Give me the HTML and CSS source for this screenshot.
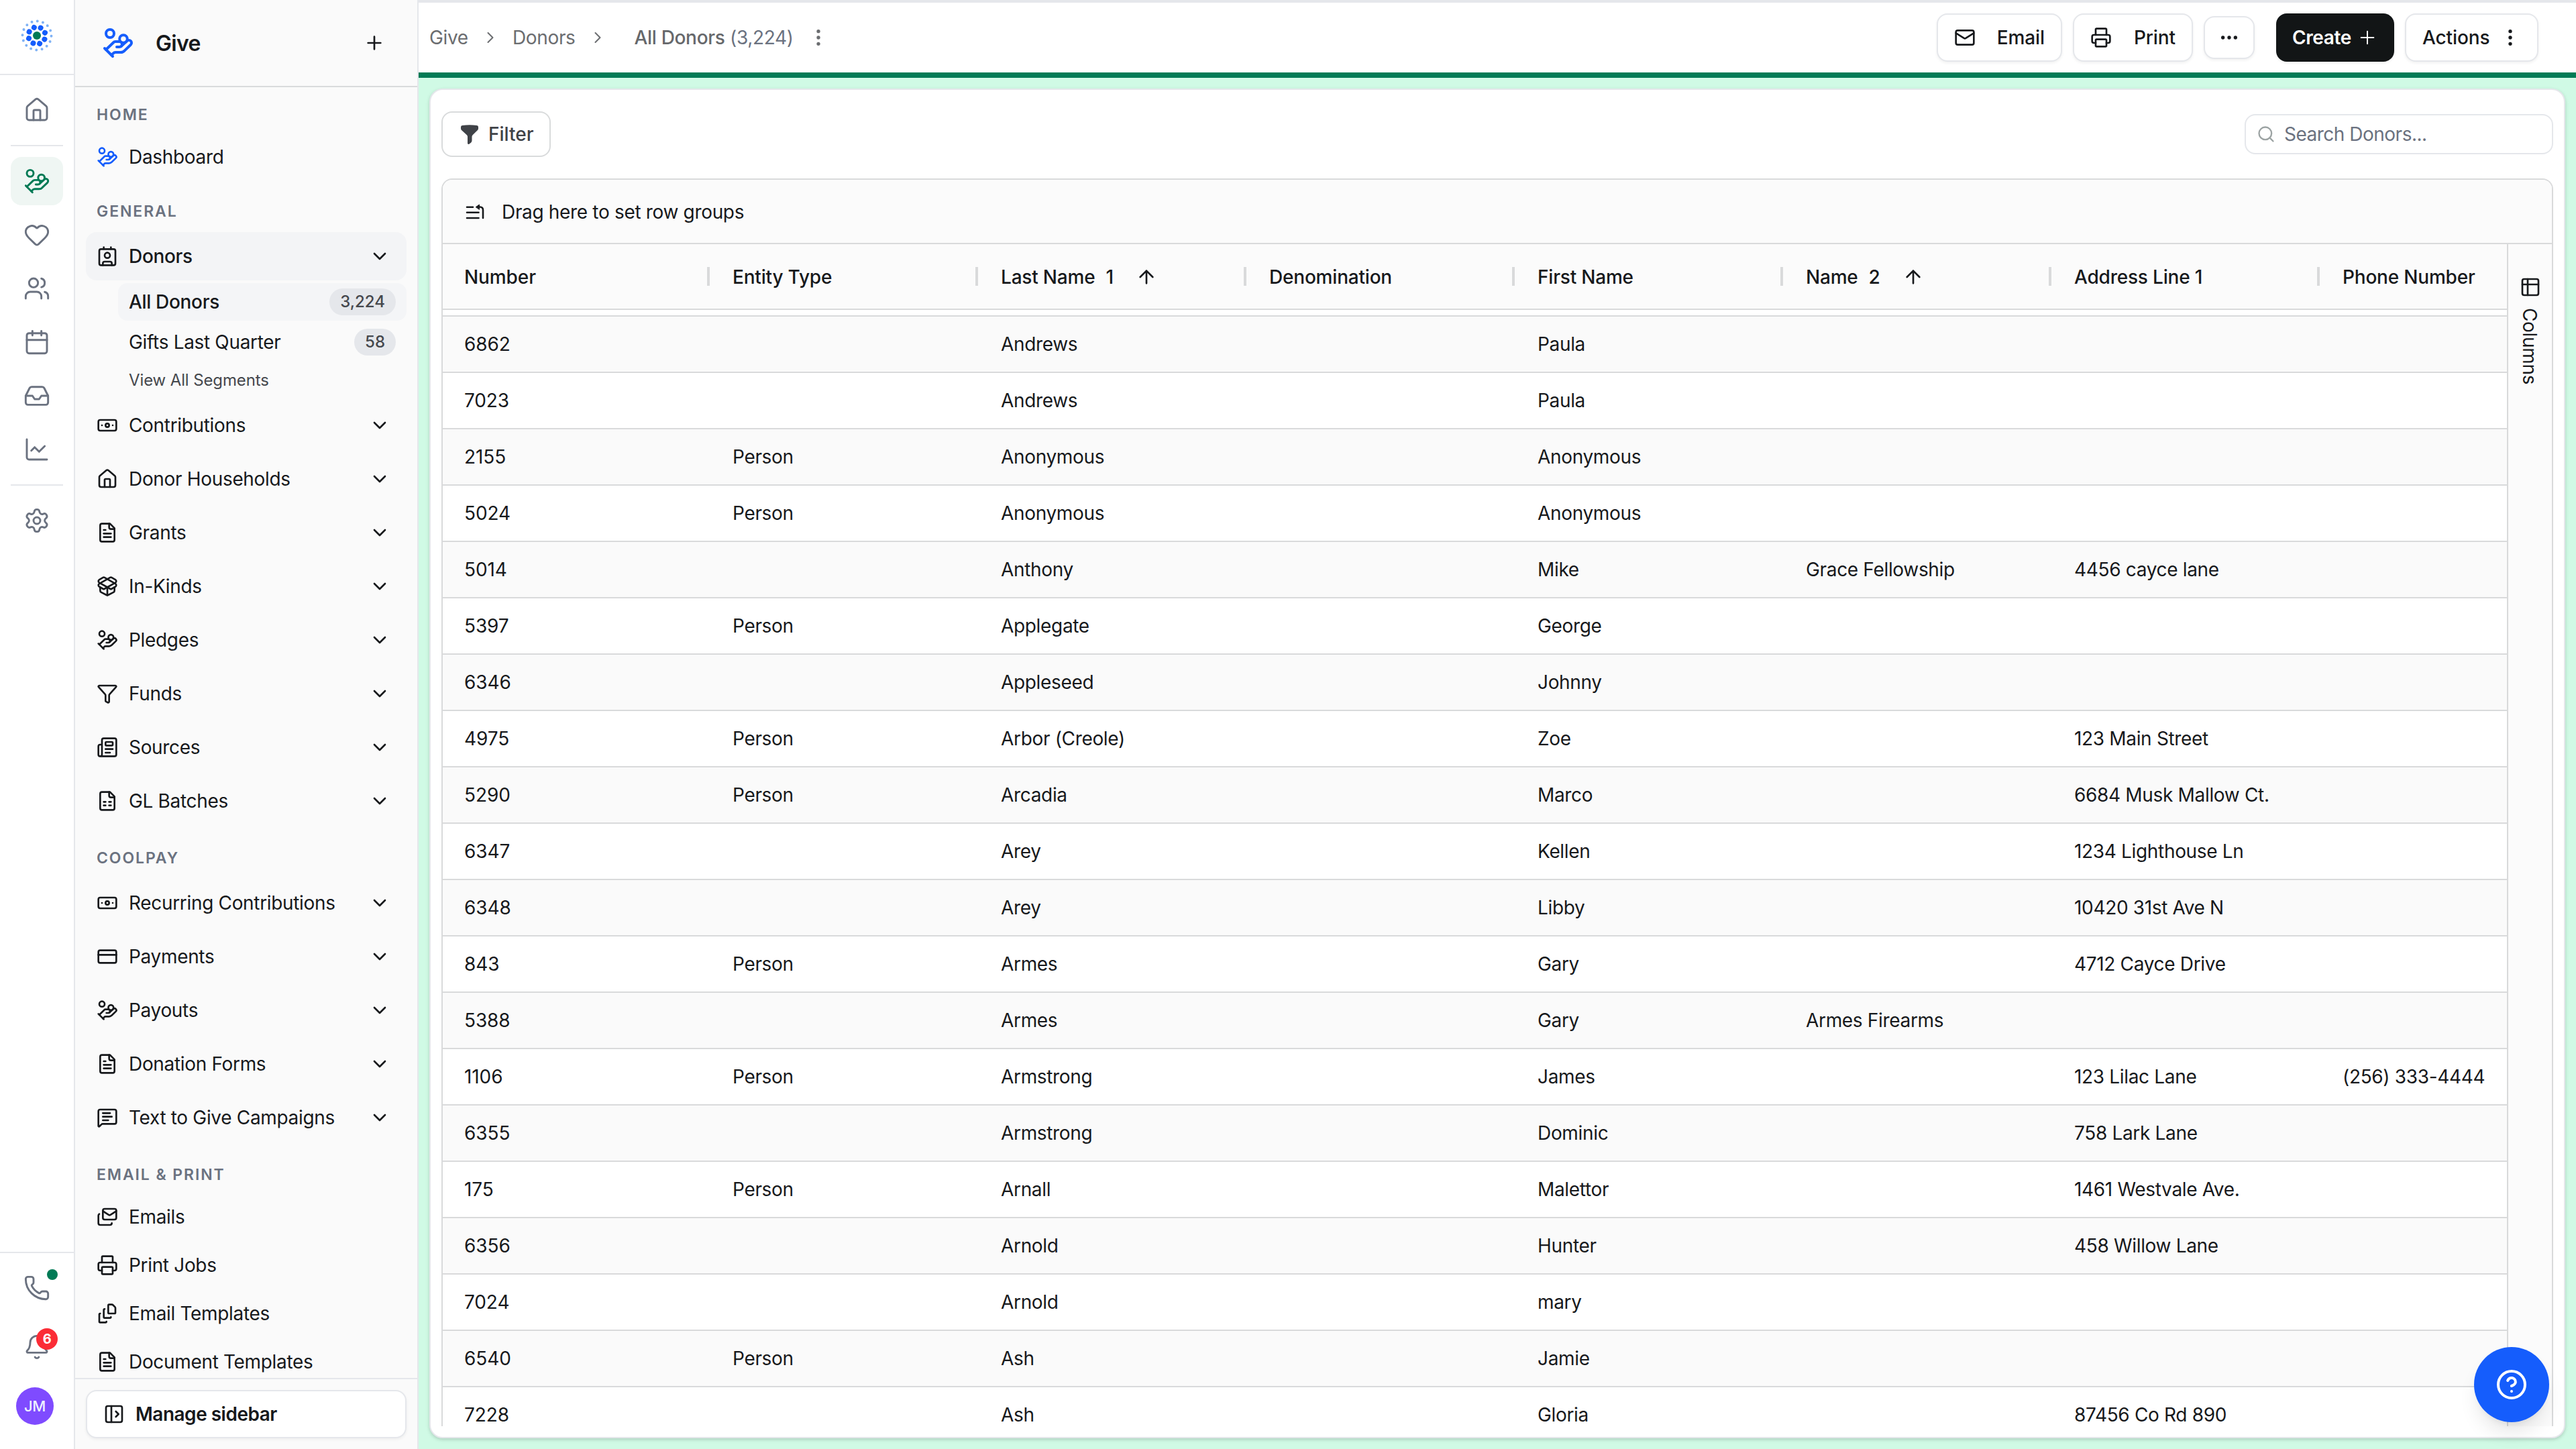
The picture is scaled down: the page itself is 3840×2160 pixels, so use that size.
FILE: index.html
```html
<!DOCTYPE html>
<html lang="en">
<head>
<meta charset="utf-8">
<title>All Donors</title>
<link rel="stylesheet" href="styles.css">
</head>
<body>
<svg class="sprite" aria-hidden="true">
  <symbol id="house" viewBox="0 0 24 24"><path d="M15 21v-8a1 1 0 0 0-1-1h-4a1 1 0 0 0-1 1v8"/><path d="M3 10a2 2 0 0 1 .709-1.528l7-5.999a2 2 0 0 1 2.582 0l7 5.999A2 2 0 0 1 21 10v9a2 2 0 0 1-2 2H5a2 2 0 0 1-2-2z"/></symbol>
  <symbol id="coins" viewBox="0 0 24 24"><path d="M11 15h2a2 2 0 1 0 0-4h-3c-.6 0-1.1.2-1.4.6L3 17"/><path d="m7 21 1.6-1.4c.3-.4.8-.6 1.4-.6h4c1.1 0 2.1-.4 2.8-1.2l4.6-4.4a2 2 0 0 0-2.75-2.91l-4.2 3.9"/><path d="m2 16 6 6"/><circle cx="16" cy="9" r="2.9"/><circle cx="6" cy="5" r="3"/></symbol>
  <symbol id="heart" viewBox="0 0 24 24"><path d="M2 9.5a5.5 5.5 0 0 1 9.591-3.676.56.56 0 0 0 .818 0A5.49 5.49 0 0 1 22 9.5c0 2.29-1.5 4-3 5.5l-5.492 5.313a2 2 0 0 1-3 .019L5 15c-1.5-1.5-3-3.2-3-5.5"/></symbol>
  <symbol id="users" viewBox="0 0 24 24"><path d="M16 21v-2a4 4 0 0 0-4-4H6a4 4 0 0 0-4 4v2"/><path d="M16 3.128a4 4 0 0 1 0 7.744"/><path d="M22 21v-2a4 4 0 0 0-3-3.87"/><circle cx="9" cy="7" r="4"/></symbol>
  <symbol id="calendar" viewBox="0 0 24 24"><path d="M8 2v4"/><path d="M16 2v4"/><rect width="18" height="18" x="3" y="4" rx="2"/><path d="M3 10h18"/></symbol>
  <symbol id="inbox" viewBox="0 0 24 24"><path d="M22 12h-6l-2 3h-4l-2-3H2"/><path d="M5.45 5.11 2 12v6a2 2 0 0 0 2 2h16a2 2 0 0 0 2-2v-6l-3.45-6.89A2 2 0 0 0 16.76 4H7.24a2 2 0 0 0-1.79 1.11z"/></symbol>
  <symbol id="chart" viewBox="0 0 24 24"><path d="M3 3v16a2 2 0 0 0 2 2h16"/><path d="m19 9-5 5-4-4-3 3"/></symbol>
  <symbol id="settings" viewBox="0 0 24 24"><path d="M9.671 4.136a2.34 2.34 0 0 1 4.659 0 2.34 2.34 0 0 0 3.319 1.915 2.34 2.34 0 0 1 2.33 4.033 2.34 2.34 0 0 0 0 3.831 2.34 2.34 0 0 1-2.33 4.033 2.34 2.34 0 0 0-3.319 1.915 2.34 2.34 0 0 1-4.659 0 2.34 2.34 0 0 0-3.32-1.915 2.34 2.34 0 0 1-2.33-4.033 2.34 2.34 0 0 0 0-3.831A2.34 2.34 0 0 1 6.35 6.051a2.34 2.34 0 0 0 3.319-1.915"/><circle cx="12" cy="12" r="3"/></symbol>
  <symbol id="contact" viewBox="0 0 24 24"><path d="M16 2v2"/><path d="M7 22v-2a2 2 0 0 1 2-2h6a2 2 0 0 1 2 2v2"/><path d="M8 2v2"/><circle cx="12" cy="11" r="3"/><rect x="3" y="4" width="18" height="18" rx="2"/></symbol>
  <symbol id="banknote" viewBox="0 0 24 24"><rect width="20" height="12" x="2" y="6" rx="2"/><circle cx="12" cy="12" r="2"/><path d="M6 12h.01M18 12h.01"/></symbol>
  <symbol id="file-text" viewBox="0 0 24 24"><path d="M15 2H6a2 2 0 0 0-2 2v16a2 2 0 0 0 2 2h12a2 2 0 0 0 2-2V7Z"/><path d="M14 2v4a2 2 0 0 0 2 2h4"/><path d="M10 9H8"/><path d="M16 13H8"/><path d="M16 17H8"/></symbol>
  <symbol id="file-sheet" viewBox="0 0 24 24"><path d="M15 2H6a2 2 0 0 0-2 2v16a2 2 0 0 0 2 2h12a2 2 0 0 0 2-2V7Z"/><path d="M14 2v4a2 2 0 0 0 2 2h4"/><path d="M8 13h2"/><path d="M14 13h2"/><path d="M8 17h2"/><path d="M14 17h2"/></symbol>
  <symbol id="package" viewBox="0 0 24 24"><path d="M12 22v-9"/><path d="M15.17 2.21a1.67 1.67 0 0 1 1.63 0L21 4.57a1.93 1.93 0 0 1 0 3.36L8.82 14.79a1.655 1.655 0 0 1-1.64 0L3 12.43a1.93 1.93 0 0 1 0-3.36z"/><path d="M20 13v3.87a2.06 2.06 0 0 1-1.11 1.83l-6 3.08a1.93 1.93 0 0 1-1.78 0l-6-3.08A2.06 2.06 0 0 1 4 16.87V13"/><path d="M21 12.43a1.93 1.93 0 0 0 0-3.36L8.83 2.2a1.64 1.64 0 0 0-1.63 0L3 4.57a1.93 1.93 0 0 0 0 3.36l12.18 6.86a1.636 1.636 0 0 0 1.63 0z"/></symbol>
  <symbol id="funnel" viewBox="0 0 24 24"><path d="M10 20a1 1 0 0 0 .553.895l2 1A1 1 0 0 0 14 21v-7a2 2 0 0 1 .517-1.341L21.74 4.67A1 1 0 0 0 21 3H3a1 1 0 0 0-.742 1.67l7.225 7.989A2 2 0 0 1 10 14z"/></symbol>
  <symbol id="newspaper" viewBox="0 0 24 24"><path d="M15 18h-5"/><path d="M18 14h-8"/><path d="M4 22h16a2 2 0 0 0 2-2V4a2 2 0 0 0-2-2H8a2 2 0 0 0-2 2v16a2 2 0 0 1-4 0v-9a2 2 0 0 1 2-2h2"/><rect width="8" height="4" x="10" y="6" rx="1"/></symbol>
  <symbol id="card" viewBox="0 0 24 24"><rect width="20" height="14" x="2" y="5" rx="2"/><path d="M2 10h20"/></symbol>
  <symbol id="message" viewBox="0 0 24 24"><path d="M22 17a2 2 0 0 1-2 2H6.828a2 2 0 0 0-1.414.586l-2.202 2.202A.71.71 0 0 1 2 21.286V5a2 2 0 0 1 2-2h16a2 2 0 0 1 2 2z"/><path d="M7 11h10"/><path d="M7 15h6"/><path d="M7 7h8"/></symbol>
  <symbol id="mails" viewBox="0 0 24 24"><path d="M17 19a2 2 0 0 1-2 2H4a2 2 0 0 1-2-2v-8.500a2 2 0 0 1 1-1.700"/><path d="m22 5.500-6.419 4.179a2 2 0 0 1-2.162 0L7 5.500"/><rect x="7" y="3" width="15" height="12" rx="2"/></symbol>
  <symbol id="printer" viewBox="0 0 24 24"><path d="M6 18H4a2 2 0 0 1-2-2v-5a2 2 0 0 1 2-2h16a2 2 0 0 1 2 2v5a2 2 0 0 1-2 2h-2"/><path d="M6 9V3a1 1 0 0 1 1-1h10a1 1 0 0 1 1 1v6"/><rect x="6" y="14" width="12" height="8" rx="1"/></symbol>
  <symbol id="file-stack" viewBox="0 0 24 24"><path d="M11 21a1 1 0 0 1-1 1H4a1 1 0 0 1-1-1v-8a1 1 0 0 1 1-1"/><path d="M16 16a1 1 0 0 1-1 1H9a1 1 0 0 1-1-1V8a1 1 0 0 1 1-1"/><path d="M21 6a2 2 0 0 0-.586-1.414l-2-2A2 2 0 0 0 17 2h-3a1 1 0 0 0-1 1v8a1 1 0 0 0 1 1h6a1 1 0 0 0 1-1z"/></symbol>
  <symbol id="phone" viewBox="0 0 24 24"><path d="M13.832 16.568a1 1 0 0 0 1.213-.303l.355-.465A2 2 0 0 1 17 15h3a2 2 0 0 1 2 2v3a2 2 0 0 1-2 2A18 18 0 0 1 2 4a2 2 0 0 1 2-2h3a2 2 0 0 1 2 2v3a2 2 0 0 1-.8 1.600l-.468.351a1 1 0 0 0-.292 1.233 14 14 0 0 0 6.392 6.384"/></symbol>
  <symbol id="bell" viewBox="0 0 24 24"><path d="M10.268 21a2 2 0 0 0 3.464 0"/><path d="M3.262 15.326A1 1 0 0 0 4 17h16a1 1 0 0 0 .74-1.673C19.41 13.956 18 12.499 18 8A6 6 0 0 0 6 8c0 4.499-1.411 5.956-2.738 7.326"/></symbol>
  <symbol id="panel-open" viewBox="0 0 24 24"><rect width="18" height="18" x="3" y="3" rx="2"/><path d="M9 3v18"/><path d="m14 9 3 3-3 3"/></symbol>
  <symbol id="mail" viewBox="0 0 24 24"><path d="m22 7-8.991 5.727a2 2 0 0 1-2.009 0L2 7"/><rect x="2" y="4" width="20" height="16" rx="2"/></symbol>
  <symbol id="search" viewBox="0 0 24 24"><path d="m21 21-4.340-4.340"/><circle cx="11" cy="11" r="8"/></symbol>
  <symbol id="help" viewBox="0 0 24 24"><circle cx="12" cy="12" r="10"/><path d="M9.090 9a3 3 0 0 1 5.830 1c0 2-3 3-3 3"/><path d="M12 17h.01"/></symbol>
  <symbol id="plus" viewBox="0 0 24 24"><path d="M5 12h14M12 5v14"/></symbol>
  <symbol id="down" viewBox="0 0 24 24"><path d="m6 9 6 6 6-6"/></symbol>
  <symbol id="right" viewBox="0 0 24 24"><path d="m9 18 6-6-6-6"/></symbol>
  <symbol id="up" viewBox="0 0 24 24"><path d="m5 12 7-7 7 7M12 19V5"/></symbol>
  <symbol id="dots" viewBox="0 0 24 24"><circle cx="12" cy="12" r="1"/><circle cx="12" cy="5" r="1"/><circle cx="12" cy="19" r="1"/></symbol>
  <symbol id="ellipsis" viewBox="0 0 24 24"><circle cx="12" cy="12" r="1"/><circle cx="5" cy="12" r="1"/><circle cx="19" cy="12" r="1"/></symbol>
  <symbol id="table" viewBox="0 0 24 24"><rect width="18" height="18" x="3" y="3" rx="2"/><path d="M3 9h18M9 3v18"/></symbol>
</svg>

<div class="app">
  <aside class="rail">
    <div class="rail-logo">
      <svg class="logo" viewBox="-24 -24 48 48">
        <circle class="logo-outer" r="21.500" pathLength="16" transform="rotate(2)"/>
        <circle class="logo-inner" r="12.700" pathLength="8" transform="rotate(26)"/>
        <circle class="logo-core" r="6"/>
      </svg>
    </div>
    <nav class="rail-nav">
      <a class="rail-item rail-home"><svg class="icon"><use href="#house"/></svg></a>
      <hr class="rail-rule">
      <a class="rail-item rail-active"><svg class="icon"><use href="#coins"/></svg></a>
      <a class="rail-item"><svg class="icon"><use href="#heart"/></svg></a>
      <a class="rail-item"><svg class="icon"><use href="#users"/></svg></a>
      <a class="rail-item"><svg class="icon"><use href="#calendar"/></svg></a>
      <a class="rail-item"><svg class="icon"><use href="#inbox"/></svg></a>
      <a class="rail-item"><svg class="icon"><use href="#chart"/></svg></a>
      <hr class="rail-rule">
      <a class="rail-item"><svg class="icon"><use href="#settings"/></svg></a>
    </nav>
    <div class="rail-foot">
      <a class="rail-tool"><svg class="icon"><use href="#phone"/></svg><span class="status-dot"></span></a>
      <a class="rail-tool"><svg class="icon"><use href="#bell"/></svg><span class="count-dot">6</span></a>
      <span class="avatar">JM</span>
    </div>
  </aside>

  <aside class="sidebar">
    <header class="side-head">
      <svg class="icon side-logo"><use href="#coins"/></svg>
      <span class="side-title">Give</span>
      <svg class="icon"><use href="#plus"/></svg>
    </header>
    <nav class="side-nav">
      <h2 class="label">HOME</h2>
      <div class="group">
        <a class="item short"><svg class="icon blue"><use href="#coins"/></svg><span>Dashboard</span></a>
      </div>
      <h2 class="label">GENERAL</h2>
      <div class="group">
        <div class="subgroup">
          <a class="item current"><svg class="icon"><use href="#contact"/></svg><span>Donors</span><svg class="icon"><use href="#down"/></svg></a>
          <a class="subitem current"><span>All Donors</span><b class="badge">3,224</b></a>
          <a class="subitem"><span>Gifts Last Quarter</span><b class="badge">58</b></a>
          <a class="subitem view-all">View All Segments</a>
        </div>
        <a class="item"><svg class="icon"><use href="#banknote"/></svg><span>Contributions</span><svg class="icon"><use href="#down"/></svg></a>
        <a class="item"><svg class="icon"><use href="#house"/></svg><span>Donor Households</span><svg class="icon"><use href="#down"/></svg></a>
        <a class="item"><svg class="icon"><use href="#file-text"/></svg><span>Grants</span><svg class="icon"><use href="#down"/></svg></a>
        <a class="item"><svg class="icon"><use href="#package"/></svg><span>In-Kinds</span><svg class="icon"><use href="#down"/></svg></a>
        <a class="item"><svg class="icon"><use href="#coins"/></svg><span>Pledges</span><svg class="icon"><use href="#down"/></svg></a>
        <a class="item"><svg class="icon"><use href="#funnel"/></svg><span>Funds</span><svg class="icon"><use href="#down"/></svg></a>
        <a class="item"><svg class="icon"><use href="#newspaper"/></svg><span>Sources</span><svg class="icon"><use href="#down"/></svg></a>
        <a class="item"><svg class="icon"><use href="#file-sheet"/></svg><span>GL Batches</span><svg class="icon"><use href="#down"/></svg></a>
      </div>
      <h2 class="label">COOLPAY</h2>
      <div class="group">
        <a class="item"><svg class="icon"><use href="#banknote"/></svg><span>Recurring Contributions</span><svg class="icon"><use href="#down"/></svg></a>
        <a class="item"><svg class="icon"><use href="#card"/></svg><span>Payments</span><svg class="icon"><use href="#down"/></svg></a>
        <a class="item"><svg class="icon"><use href="#coins"/></svg><span>Payouts</span><svg class="icon"><use href="#down"/></svg></a>
        <a class="item"><svg class="icon"><use href="#file-text"/></svg><span>Donation Forms</span><svg class="icon"><use href="#down"/></svg></a>
        <a class="item"><svg class="icon"><use href="#message"/></svg><span>Text to Give Campaigns</span><svg class="icon"><use href="#down"/></svg></a>
      </div>
      <h2 class="label">EMAIL &amp; PRINT</h2>
      <div class="group">
        <a class="item short"><svg class="icon"><use href="#mails"/></svg><span>Emails</span></a>
        <a class="item short"><svg class="icon"><use href="#printer"/></svg><span>Print Jobs</span></a>
        <a class="item short"><svg class="icon"><use href="#file-stack"/></svg><span>Email Templates</span></a>
        <a class="item short"><svg class="icon"><use href="#file-text"/></svg><span>Document Templates</span></a>
      </div>
    </nav>
    <footer class="side-foot">
      <button class="manage"><svg class="icon"><use href="#panel-open"/></svg>Manage sidebar</button>
    </footer>
  </aside>

  <main class="main">
    <header class="topbar">
      <nav class="crumbs">
        <span>Give</span>
        <svg class="icon crumb-sep"><use href="#right"/></svg>
        <span>Donors</span>
        <svg class="icon crumb-sep"><use href="#right"/></svg>
        <span class="crumb-now"><b>All Donors</b> (3,224)</span>
        <svg class="icon crumb-dots"><use href="#dots"/></svg>
      </nav>
      <div class="actions">
        <button class="btn btn-email"><svg class="icon"><use href="#mail"/></svg>Email</button>
        <button class="btn btn-print"><svg class="icon"><use href="#printer"/></svg>Print</button>
        <button class="btn btn-more"><svg class="icon"><use href="#ellipsis"/></svg></button>
        <button class="btn btn-create">Create<svg class="icon"><use href="#plus"/></svg></button>
        <button class="btn btn-actions">Actions<svg class="icon"><use href="#dots"/></svg></button>
      </div>
    </header>
    <div class="stage">
      <section class="panel">
        <div class="tools">
          <button class="filter"><svg class="filter-icon" viewBox="0 0 26 29"><path d="M2 1Q13-.6 24 1Q26 1.300 26 3.300V5.500Q26 7 25 8L17.600 15.200Q16.500 16.300 16.500 17.800V23.500Q16.500 25.500 15 26.800L12.300 28.700Q10 29.600 10 27.500V17.800Q10 16.300 8.900 15.200L1 8Q0 7 0 5.500V3.300Q0 1.300 2 1Z"/></svg>Filter</button>
          <label class="search"><svg class="icon"><use href="#search"/></svg>Search Donors...</label>
        </div>
        <div class="grid">
          <div class="grid-groups">
            <svg class="groups-icon" viewBox="0 0 28 24"><path d="M2 4.700h9M2 12.700h17.500M2 21h17.500M26 21V9q0-4.500-4.500-4.500H18"/><path class="solid" d="M15.500 4.500l5-3.500v7z"/></svg>
            Drag here to set row groups
          </div>
          <div class="grid-main">
            <div class="grid-view">
              <div class="row head">
                <span>Number</span><span>Entity Type</span><span>Last Name<em>1</em><svg class="icon"><use href="#up"/></svg></span><span>Denomination</span><span>First Name</span><span>Name<em>2</em><svg class="icon"><use href="#up"/></svg></span><span>Address Line 1</span><span>Phone Number</span>
              </div>
              <div class="rows">
                <div class="row"><span>6862</span><span></span><span>Andrews</span><span></span><span>Paula</span></div>
                <div class="row"><span>7023</span><span></span><span>Andrews</span><span></span><span>Paula</span></div>
                <div class="row"><span>2155</span><span>Person</span><span>Anonymous</span><span></span><span>Anonymous</span></div>
                <div class="row"><span>5024</span><span>Person</span><span>Anonymous</span><span></span><span>Anonymous</span></div>
                <div class="row"><span>5014</span><span></span><span>Anthony</span><span></span><span>Mike</span><span>Grace Fellowship</span><span>4456 cayce lane</span></div>
                <div class="row"><span>5397</span><span>Person</span><span>Applegate</span><span></span><span>George</span></div>
                <div class="row"><span>6346</span><span></span><span>Appleseed</span><span></span><span>Johnny</span></div>
                <div class="row"><span>4975</span><span>Person</span><span>Arbor (Creole)</span><span></span><span>Zoe</span><span></span><span>123 Main Street</span></div>
                <div class="row"><span>5290</span><span>Person</span><span>Arcadia</span><span></span><span>Marco</span><span></span><span>6684 Musk Mallow Ct.</span></div>
                <div class="row"><span>6347</span><span></span><span>Arey</span><span></span><span>Kellen</span><span></span><span>1234 Lighthouse Ln</span></div>
                <div class="row"><span>6348</span><span></span><span>Arey</span><span></span><span>Libby</span><span></span><span>10420 31st Ave N</span></div>
                <div class="row"><span>843</span><span>Person</span><span>Armes</span><span></span><span>Gary</span><span></span><span>4712 Cayce Drive</span></div>
                <div class="row"><span>5388</span><span></span><span>Armes</span><span></span><span>Gary</span><span>Armes Firearms</span></div>
                <div class="row"><span>1106</span><span>Person</span><span>Armstrong</span><span></span><span>James</span><span></span><span>123 Lilac Lane</span><span>(256) 333-4444</span></div>
                <div class="row"><span>6355</span><span></span><span>Armstrong</span><span></span><span>Dominic</span><span></span><span>758 Lark Lane</span></div>
                <div class="row"><span>175</span><span>Person</span><span>Arnall</span><span></span><span>Malettor</span><span></span><span>1461 Westvale Ave.</span></div>
                <div class="row"><span>6356</span><span></span><span>Arnold</span><span></span><span>Hunter</span><span></span><span>458 Willow Lane</span></div>
                <div class="row"><span>7024</span><span></span><span>Arnold</span><span></span><span>mary</span></div>
                <div class="row"><span>6540</span><span>Person</span><span>Ash</span><span></span><span>Jamie</span></div>
                <div class="row"><span>7228</span><span></span><span>Ash</span><span></span><span>Gloria</span><span></span><span>87456 Co Rd 890</span></div>
              </div>
            </div>
            <div class="grid-side"><svg class="icon"><use href="#table"/></svg><span>Columns</span></div>
          </div>
        </div>
      </section>
    </div>
  </main>
</div>
<button class="help"><svg class="icon"><use href="#help"/></svg></button>
</body>
</html>
```
FILE: styles.css
```css
* { box-sizing: border-box; }
body {
  margin: 0;
  font-family: Inter, "Liberation Sans", sans-serif;
  font-size: 28px;
  line-height: 40px;
  letter-spacing: -.33px;
  color: #17191c;
  background: #fff;
}
button { font: inherit; color: inherit; letter-spacing: inherit; margin: 0; padding: 0; }
h2, hr { margin: 0; }
.sprite { display: none; }
.icon {
  flex: none;
  width: 32px;
  height: 32px;
  fill: none;
  stroke: currentColor;
  stroke-width: 2;
  stroke-linecap: round;
  stroke-linejoin: round;
}
.app { display: flex; width: 3840px; height: 2160px; overflow: hidden; }

/* Icon rail */
.rail {
  flex: none;
  display: flex;
  flex-direction: column;
  width: 112px;
  border-right: 2px solid #e5e7eb;
  color: #6b7280;
}
.rail .icon { width: 40px; height: 40px; stroke-width: 1.75; }
.rail-logo {
  display: flex;
  justify-content: center;
  height: 112px;
  padding-top: 29px;
  border-bottom: 2px solid #e5e7eb;
}
.logo { width: 48px; height: 48px; overflow: visible; fill: none; stroke-linecap: round; }
.logo-outer { stroke: #7fb2f5; stroke-width: 4; stroke-dasharray: 0 1; }
.logo-inner { stroke: #155dfc; stroke-width: 8; stroke-dasharray: 0 1; }
.logo-core { fill: #007a55; }
.rail-nav {
  flex: 1;
  display: flex;
  flex-direction: column;
  gap: 8px;
  padding: 16px 16px 0;
}
.rail-item {
  display: flex;
  align-items: center;
  justify-content: center;
  width: 78px;
  height: 72px;
  border-radius: 16px;
}
.rail-active { background: #eff6f3; color: #007a55; }
.rail-rule { border: 0; height: 2px; background: #e5e7eb; margin: 8px 0; }
.rail-foot {
  display: flex;
  flex-direction: column;
  align-items: center;
  height: 294px;
  padding-top: 16px;
  border-top: 2px solid #e5e7eb;
}
.rail-tool {
  position: relative;
  display: flex;
  align-items: center;
  justify-content: center;
  width: 72px;
  height: 72px;
  margin-bottom: 16px;
}
.status-dot {
  position: absolute;
  top: 8px;
  right: 5px;
  width: 16px;
  height: 16px;
  border-radius: 50%;
  background: #007a55;
}
.count-dot {
  position: absolute;
  top: 8px;
  right: 5px;
  width: 32px;
  height: 32px;
  border-radius: 50%;
  background: #fb2c36;
  color: #fff;
  font-size: 20px;
  font-weight: 700;
  line-height: 32px;
  text-align: center;
}
.avatar {
  width: 56px;
  height: 56px;
  margin: 8px 6px 0 0;
  border-radius: 50%;
  background: #7f4bff;
  color: #eef2ff;
  font-size: 22px;
  font-weight: 500;
  line-height: 56px;
  text-align: center;
}

/* Sidebar */
.sidebar {
  flex: none;
  display: flex;
  flex-direction: column;
  width: 512px;
  border-right: 2px solid #e5e7eb;
  background: #fafafa;
}
.side-head {
  display: flex;
  align-items: center;
  height: 130px;
  padding: 0 48px 0 40px;
  border-bottom: 2px solid #d9dbdc;
}
.side-logo { width: 48px; height: 48px; color: #155dfc; }
.side-title { flex: 1; margin-left: 32px; padding-top: 1px; font-size: 32px; font-weight: 600; letter-spacing: -.7px; }
.side-nav { flex: 1; overflow: hidden; padding: 12px 16px 0; }
.label {
  height: 56px;
  padding-left: 16px;
  font-size: 23px;
  font-weight: 600;
  line-height: 58px;
  letter-spacing: 1.9px;
  color: #6b7280;
}
.group { display: flex; flex-direction: column; gap: 8px; padding: 4px 0 20px; }
.subgroup { display: flex; flex-direction: column; gap: 4px; }
.item {
  display: flex;
  align-items: center;
  gap: 16px;
  height: 72px;
  padding: 0 24px 0 16px;
  border-radius: 16px;
}
.item span { flex: 1; }
.item.short { height: 64px; }
.item.current { background: #f3f4f6; font-weight: 500; }
.blue { color: #155dfc; }
.subitem {
  display: flex;
  align-items: center;
  justify-content: space-between;
  height: 56px;
  margin-left: 48px;
  padding: 0 16px;
  border-radius: 14px;
}
.subitem.current { background: #f4f5f7; font-weight: 500; }
.badge {
  height: 40px;
  padding: 0 16px;
  border-radius: 20px;
  background: #e5e7eb;
  color: #45484d;
  font-size: 24px;
  font-weight: 500;
  letter-spacing: 0;
}
.view-all { height: 48px; padding-top: 1px; font-size: 24px; letter-spacing: -.12px; color: #45484d; }
.side-foot { height: 106px; padding: 16px; border-top: 2px solid #e5e7eb; }
.manage {
  display: flex;
  align-items: center;
  gap: 16px;
  width: 478px;
  height: 72px;
  padding-left: 24px;
  border: 2px solid #e5e7eb;
  border-radius: 16px;
  background: #fff;
  box-shadow: 0 2px 4px rgba(0, 0, 0, .05);
  font-weight: 600;
  letter-spacing: -.5px;
}

/* Top bar */
.main { flex: 1; display: flex; flex-direction: column; min-width: 0; }
.topbar {
  flex: none;
  display: flex;
  align-items: center;
  justify-content: space-between;
  height: 116px;
  padding: 0 56px 0 16px;
  border-top: 4px solid #e5e7eb;
  border-bottom: 8px solid #007a55;
}
.crumbs { display: flex; align-items: center; color: #6b6d70; }
.crumb-sep { width: 28px; height: 28px; margin: 0 19px; stroke-width: 1.75; }
.crumb-now { margin-left: 22px; color: #6b7280; }
.crumb-now b { font-weight: 500; color: #66686b; }
.crumb-dots { width: 32px; margin-left: 21px; }
.actions { display: flex; align-items: center; gap: 16px; }
.btn {
  display: flex;
  align-items: center;
  justify-content: space-between;
  height: 72px;
  border: 2px solid #e5e7eb;
  border-radius: 16px;
  background: #fff;
  box-shadow: 0 2px 4px rgba(0, 0, 0, .06);
  font-weight: 500;
  letter-spacing: -.1px;
}
.btn-email { width: 187px; padding: 0 24px; }
.btn-print { width: 179px; padding: 0 24px; }
.btn-more { width: 76px; height: 64px; padding: 0 20px; }
.btn-create { width: 176px; margin-left: 16px; padding: 0 22px; border-color: #121516; background: #121516; color: #fff; font-weight: 600; letter-spacing: -.4px; }
.btn-create .icon { stroke-width: 1.5; }
.btn-actions { width: 199px; padding: 0 24px; }

/* Donor panel */
.stage { flex: 1; min-height: 0; padding: 16px; background: #d0fae5; }
.panel {
  display: flex;
  flex-direction: column;
  height: 100%;
  padding: 32px 16px 16px;
  border: 2px solid #e5e7eb;
  border-radius: 20px;
  background: #fff;
  box-shadow: 0 2px 6px rgba(0, 0, 0, .1), 0 2px 4px rgba(0, 0, 0, .08);
}
.tools { display: flex; align-items: center; justify-content: space-between; height: 68px; margin-bottom: 32px; }
.filter {
  display: flex;
  align-items: center;
  gap: 15px;
  width: 163px;
  height: 68px;
  padding-left: 27px;
  border: 2px solid #d9dbdc;
  border-radius: 16px;
  background: #fff;
  color: #3f4247;
  font-weight: 500;
  letter-spacing: 0;
}
.filter-icon { width: 26px; height: 29px; fill: currentColor; }
.search {
  display: flex;
  align-items: center;
  gap: 13px;
  width: 460px;
  height: 60px;
  padding-left: 16px;
  border: 2px solid #e5e7eb;
  border-radius: 16px;
  color: #6b7280;
  letter-spacing: -.5px;
}
.search .icon { width: 28px; height: 28px; color: #9ca3a3; }

/* Data grid */
.grid {
  flex: 1;
  display: flex;
  flex-direction: column;
  min-height: 0;
  border: 2px solid #d9dadb;
  border-bottom: 0;
  border-radius: 16px 16px 0 0;
  overflow: hidden;
}
.grid-groups {
  flex: none;
  display: flex;
  align-items: center;
  gap: 26px;
  height: 96px;
  padding: 1px 0 0 34px;
  border-bottom: 2px solid #d9dadb;
  background: #fbfbfb;
}
.groups-icon { width: 28px; height: 24px; fill: none; stroke: currentColor; stroke-width: 2.6; stroke-linecap: round; }
.groups-icon .solid { fill: currentColor; stroke-width: 1; }
.grid-main { flex: 1; display: flex; min-height: 0; }
.grid-view { flex: 1; min-width: 0; overflow: hidden; }
.row {
  display: grid;
  grid-template-columns: repeat(8, 400px);
  height: 84px;
  border-bottom: 2px solid #d9dadb;
  line-height: 82px;
  white-space: nowrap;
}
.row span { padding-left: 32px; }
.row span:first-child { letter-spacing: -.1px; }
.head { height: 98px; background: #fbfbfb; font-weight: 500; letter-spacing: -.2px; }
.head span {
  display: flex;
  align-items: center;
  height: 96px;
  padding-top: 1px;
  background: linear-gradient(#d9dadb, #d9dadb) right 2px center / 4px 28px no-repeat;
}
.head em { font-style: normal; margin-left: 16px; }
.head .icon { margin-left: 33px; }
.rows { margin-top: 8px; border-top: 2px solid #d9dadb; }
.rows .row:nth-child(odd) { background: #fafafa; }
.grid-side {
  flex: none;
  display: flex;
  flex-direction: column;
  align-items: center;
  gap: 15px;
  width: 67px;
  padding-top: 48px;
  border-left: 2px solid #d9dadb;
  background: #fbfbfb;
}
.grid-side span { margin-right: 2px; writing-mode: vertical-rl; line-height: 32px; }

/* Floating help */
.help {
  position: absolute;
  left: 3688px;
  top: 2008px;
  display: flex;
  align-items: center;
  justify-content: center;
  width: 112px;
  height: 112px;
  border: 0;
  border-radius: 50%;
  background: #155dfc;
  color: #fff;
  box-shadow: 0 20px 30px -6px rgba(0, 0, 0, .1), 0 8px 12px -8px rgba(0, 0, 0, .1);
}
.help .icon { width: 48px; height: 48px; }
```
